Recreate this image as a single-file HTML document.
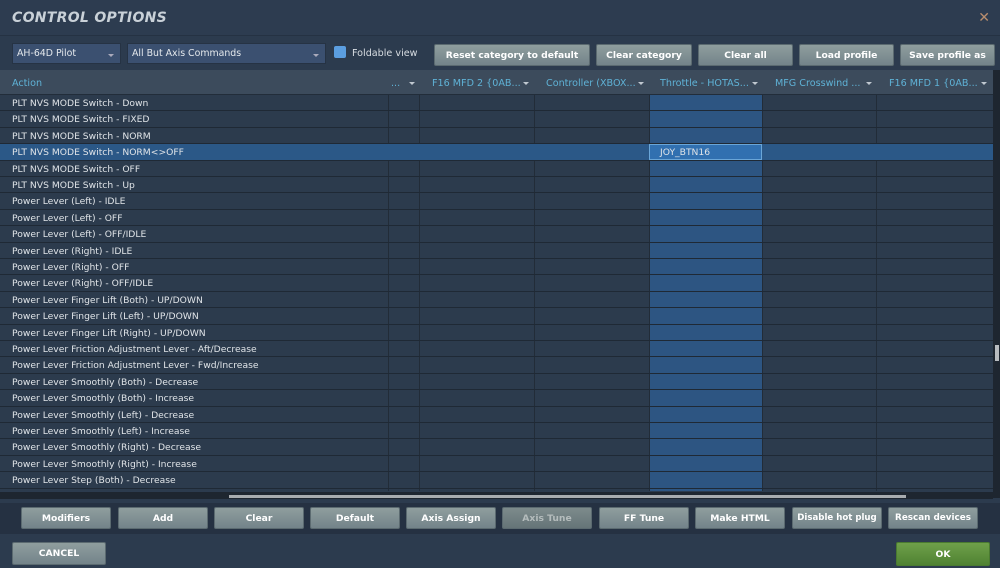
<!DOCTYPE html>
<html><head><meta charset="utf-8"><style>
*{margin:0;padding:0;box-sizing:border-box}
body{width:1000px;height:568px;overflow:hidden;background:#2c3b4e;font-family:"DejaVu Sans","Liberation Sans",sans-serif;font-size:9.2px;color:#e2e6ea;position:relative}
.abs{position:absolute}
.title{left:0;top:0;width:1000px;height:36px;background:#2d3c50;border-bottom:1px solid #253243}
.title span{position:absolute;left:12px;top:10px;font-size:14px;font-weight:bold;font-style:italic;color:#c9d1d8;letter-spacing:0.3px}
.close{right:10px;top:10px;color:#b98e6e;font-size:14px}
.sel{height:21px;top:43px;background:#3b5070;border:1px solid #263344;color:#e4e8ec;padding:4px 4px;font-size:9.4px}
.sel:after{content:"";position:absolute;right:6px;top:10px;border-left:3px solid transparent;border-right:3px solid transparent;border-top:3px solid #aab}
.btn{height:22px;background:linear-gradient(#8f9e9e,#73838a);border:1px solid #5b6a70;border-radius:2px;color:#fff;font-weight:bold;font-size:9.2px;text-align:center;line-height:21px;white-space:nowrap;overflow:hidden}
.table{left:0;top:70px;width:993px;height:421px;background:#2c3b4d;overflow:hidden}
.hdr{left:0;top:0;width:993px;height:25px;background:#3c4b5c;border-bottom:1px solid #222d3a}
.hdr div{position:absolute;top:8px;color:#5fb2d6;font-size:9.6px;white-space:nowrap}
.arr{position:absolute;top:12px;border-left:3px solid transparent;border-right:3px solid transparent;border-top:3px solid #c0c8d0}
.vl{position:absolute;top:0;width:1px;height:421px;background:#222c38}
.row{position:absolute;left:0;width:993px;height:16.4px;border-bottom:1px solid #1f2935;padding-left:12px;padding-top:1px;line-height:15px;font-size:9.2px;color:#e0e4e8;white-space:nowrap}
</style></head><body>
<div class="abs title"><span>CONTROL OPTIONS</span><div class="abs close">✕</div></div>
<div class="abs sel" style="left:12px;width:109px">AH-64D Pilot</div>
<div class="abs sel" style="left:127px;width:199px">All But Axis Commands</div>
<div class="abs" style="left:334px;top:46px;width:12px;height:12px;background:#5b9ee0;border-radius:2px"></div>
<div class="abs" style="left:352px;top:48px;color:#d8dde2;font-size:9.6px">Foldable view</div>
<div class="abs btn" style="left:434px;top:44px;width:156px">Reset category to default</div>
<div class="abs btn" style="left:596px;top:44px;width:96px">Clear category</div>
<div class="abs btn" style="left:698px;top:44px;width:95px">Clear all</div>
<div class="abs btn" style="left:799px;top:44px;width:95px">Load profile</div>
<div class="abs btn" style="left:900px;top:44px;width:95px">Save profile as</div>

<div class="abs table">
<div class="abs" style="left:649px;top:25px;width:113px;height:396px;background:#2d5582"></div>
<div class="vl" style="left:388px"></div><div class="vl" style="left:419px"></div><div class="vl" style="left:534px"></div><div class="vl" style="left:649px"></div><div class="vl" style="left:762px"></div><div class="vl" style="left:876px"></div>
<div class="abs hdr">
<div style="left:12px">Action</div>
<div style="left:391px">...</div><span class="arr" style="left:409px"></span>
<div style="left:432px">F16 MFD 2 {0AB...</div><span class="arr" style="left:523px"></span>
<div style="left:546px">Controller (XBOX...</div><span class="arr" style="left:638px"></span>
<div style="left:660px">Throttle - HOTAS...</div><span class="arr" style="left:752px"></span>
<div style="left:775px">MFG Crosswind ...</div><span class="arr" style="left:866px"></span>
<div style="left:889px">F16 MFD 1 {0AB...</div><span class="arr" style="left:981px"></span>
</div>
<div style="position:absolute;left:0;top:25px;width:993px">
<div class="row" style="top:0">PLT NVS MODE Switch - Down</div>
<div class="row" style="top:16.4px">PLT NVS MODE Switch - FIXED</div>
<div class="row" style="top:32.8px">PLT NVS MODE Switch - NORM</div>
<div class="row" style="top:49.2px;background:#2b5887">PLT NVS MODE Switch - NORM&lt;&gt;OFF<div style="position:absolute;left:649px;top:0;width:113px;height:16px;background:#3170b0;border:1px solid #6aa6d8;padding-left:10px;padding-top:1px;line-height:14px">JOY_BTN16</div></div>
<div class="row" style="top:65.6px">PLT NVS MODE Switch - OFF</div>
<div class="row" style="top:82px">PLT NVS MODE Switch - Up</div>
<div class="row" style="top:98.4px">Power Lever (Left) - IDLE</div>
<div class="row" style="top:114.8px">Power Lever (Left) - OFF</div>
<div class="row" style="top:131.2px">Power Lever (Left) - OFF/IDLE</div>
<div class="row" style="top:147.6px">Power Lever (Right) - IDLE</div>
<div class="row" style="top:164px">Power Lever (Right) - OFF</div>
<div class="row" style="top:180.4px">Power Lever (Right) - OFF/IDLE</div>
<div class="row" style="top:196.8px">Power Lever Finger Lift (Both) - UP/DOWN</div>
<div class="row" style="top:213.2px">Power Lever Finger Lift (Left) - UP/DOWN</div>
<div class="row" style="top:229.6px">Power Lever Finger Lift (Right) - UP/DOWN</div>
<div class="row" style="top:246px">Power Lever Friction Adjustment Lever - Aft/Decrease</div>
<div class="row" style="top:262.4px">Power Lever Friction Adjustment Lever - Fwd/Increase</div>
<div class="row" style="top:278.8px">Power Lever Smoothly (Both) - Decrease</div>
<div class="row" style="top:295.2px">Power Lever Smoothly (Both) - Increase</div>
<div class="row" style="top:311.6px">Power Lever Smoothly (Left) - Decrease</div>
<div class="row" style="top:328px">Power Lever Smoothly (Left) - Increase</div>
<div class="row" style="top:344.4px">Power Lever Smoothly (Right) - Decrease</div>
<div class="row" style="top:360.8px">Power Lever Smoothly (Right) - Increase</div>
<div class="row" style="top:377.2px">Power Lever Step (Both) - Decrease</div>
<div class="row" style="top:393.6px">Power Lever Step (Both) - Increase</div>
</div>
</div>
<div class="abs" style="left:993px;top:70px;width:7px;height:428px;background:#1e2630"></div>
<div class="abs" style="left:995px;top:345px;width:4px;height:16px;background:#b8bcc0"></div>
<div class="abs" style="left:0;top:492px;width:993px;height:7px;background:#1e2630"></div>
<div class="abs" style="left:229px;top:495px;width:677px;height:3px;background:#a8acb0"></div>

<div class="abs" style="left:0;top:503px;width:1000px;height:31px;background:#253142"></div>
<div class="abs btn" style="left:21px;top:507px;width:90px">Modifiers</div>
<div class="abs btn" style="left:118px;top:507px;width:90px">Add</div>
<div class="abs btn" style="left:214px;top:507px;width:90px">Clear</div>
<div class="abs btn" style="left:310px;top:507px;width:90px">Default</div>
<div class="abs btn" style="left:406px;top:507px;width:90px">Axis Assign</div>
<div class="abs btn" style="left:502px;top:507px;width:90px;color:#b4bcbc;background:linear-gradient(#7d8b8c,#657478)">Axis Tune</div>
<div class="abs btn" style="left:599px;top:507px;width:90px">FF Tune</div>
<div class="abs btn" style="left:695px;top:507px;width:90px">Make HTML</div>
<div class="abs btn" style="left:792px;top:507px;width:90px;font-size:8.6px">Disable hot plug</div>
<div class="abs btn" style="left:888px;top:507px;width:90px;font-size:8.8px">Rescan devices</div>

<div class="abs btn" style="left:12px;top:542px;width:94px;height:23px;line-height:22px">CANCEL</div>
<div class="abs btn" style="left:896px;top:542px;width:94px;height:24px;line-height:23px;background:linear-gradient(#6fa04a,#4f8232);border-color:#4a7a30">OK</div>
</body></html>
